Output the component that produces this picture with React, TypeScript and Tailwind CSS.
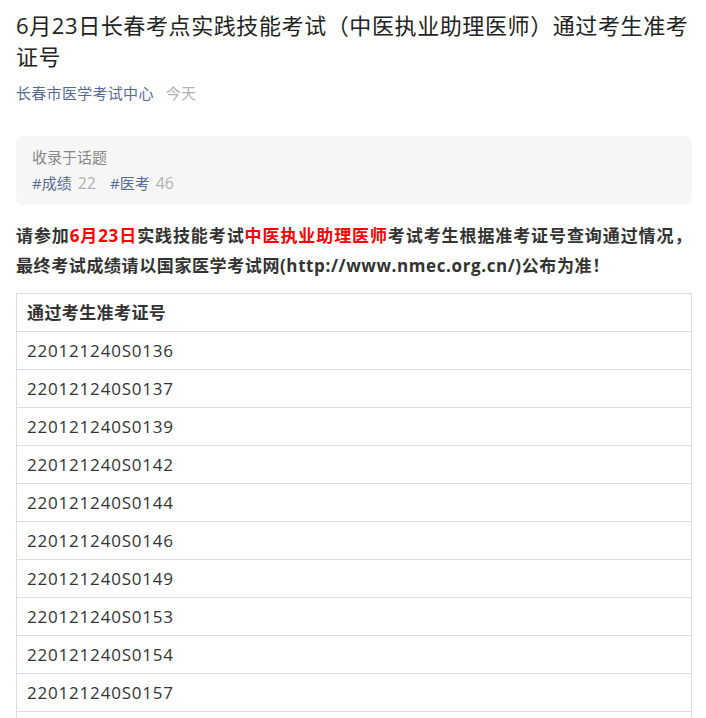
import React from 'react';

const ids = [
  '220121240S0136',
  '220121240S0137',
  '220121240S0139',
  '220121240S0142',
  '220121240S0144',
  '220121240S0146',
  '220121240S0149',
  '220121240S0153',
  '220121240S0154',
  '220121240S0157',
  '220121240S0158',
];

export default function App() {
  return (
    <div
      className="bg-white pl-4 pr-[14px] text-[#333]"
      style={{ fontFamily: '"Open Sans", "Noto Sans CJK SC", sans-serif' }}
    >
      <h1 className="pt-[10px] text-[22px] leading-[31px] font-normal tracking-[0.6px] text-[#222]">
        6月23日长春考点实践技能考试（中医执业助理医师）通过考生准考证号
      </h1>
      <div className="mt-[11px] flex gap-3 text-[15px] leading-[20px] tracking-[0.3px]">
        <span className="text-[#576b95]">长春市医学考试中心</span>
        <span className="text-[#b2b2b2]">今天</span>
      </div>

      <div className="mt-[33px] rounded-lg bg-[#f6f6f6] px-4 pt-[10px] pb-[11px]">
        <div className="text-[15px] leading-[22px] text-[#888]">收录于话题</div>
        <div className="mt-[4px] flex gap-[14px] text-[15px] leading-[22px]">
          <span>
            <span className="text-[#576b95]">#成绩</span>
            <span className="ml-[6px] text-[16px] text-[#b2b2b2]">22</span>
          </span>
          <span>
            <span className="text-[#576b95]">#医考</span>
            <span className="ml-[6px] text-[16px] text-[#b2b2b2]">46</span>
          </span>
        </div>
      </div>

      <p className="mt-[16px] text-justify text-[17px] font-bold leading-[30px] tracking-[0.6px] text-[#333]">
        请参加<span className="text-[#ff0000]">6月23日</span>实践技能考试
        <span className="text-[#ff0000]">中医执业助理医师</span>
        考试考生根据准考证号查询通过情况，最终考试成绩请以国家医学考试网(http://www.nmec.org.cn/)公布为准！
      </p>

      <table className="mt-[12px] w-full border-collapse text-[17px]">
        <thead>
          <tr>
            <th className="h-[38px] border border-[#ddd] px-[10px] text-left font-bold tracking-[0.4px] text-[#333]">
              通过考生准考证号
            </th>
          </tr>
        </thead>
        <tbody>
          {ids.map((id) => (
            <tr key={id}>
              <td className="h-[38px] border border-[#ddd] px-[10px] tracking-[0.8px] text-[#333]">
                {id}
              </td>
            </tr>
          ))}
        </tbody>
      </table>
    </div>
  );
}
